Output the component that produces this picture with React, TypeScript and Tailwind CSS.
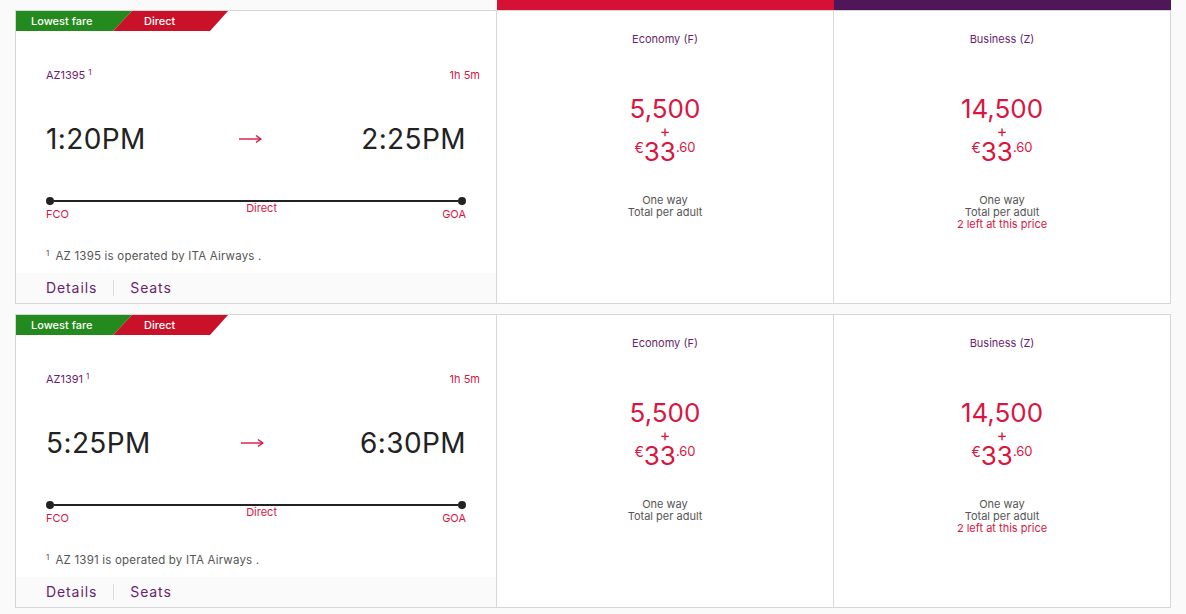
import React from "react";

type Flight = { code: string; num: string; dep: string; arr: string };

const flights: Flight[] = [
  { code: "AZ1395", num: "AZ 1395", dep: "1:20PM", arr: "2:25PM" },
  { code: "AZ1391", num: "AZ 1391", dep: "5:25PM", arr: "6:30PM" },
];

function Badge() {
  return (
    <div className="flex h-[20px] text-[11px] font-medium leading-[21px] text-white">
      <div className="w-[116px] bg-[#248a1d] pl-[15px] [clip-path:polygon(0_0,100%_0,97px_100%,0_100%)]">
        Lowest fare
      </div>
      <div className="-ml-[19px] w-[115px] bg-[#c91229] pl-[31px] [clip-path:polygon(19px_0,100%_0,97px_100%,0_100%)]">
        Direct
      </div>
    </div>
  );
}

function FareCol({ title, price, left }: { title: string; price: string; left?: boolean }) {
  return (
    <div className="flex flex-col items-center pt-[21px] text-center">
      <div className="text-[11px] leading-[14px] text-[#6a1f6e]">{title}</div>
      <div className="mt-[50px] text-[26px] leading-[26px] text-[#d9163f]">{price}</div>
      <div className="mt-[2px] text-[16px] leading-[14px] text-[#d9163f]">+</div>
      <div className="mt-[2px] flex h-[24px] items-start text-[#d9163f]">
        <span className="mt-[1px] text-[14px] leading-[14px]">€</span>
        <span className="text-[26px] leading-[24px]">33</span>
        <span className="mt-[1px] text-[13px] leading-[13px]">.60</span>
      </div>
      <div className="mt-[30px] text-[11px] leading-[12px] text-[#555]">One way</div>
      <div className="text-[11px] leading-[12px] text-[#555]">Total per adult</div>
      {left && <div className="text-[11px] leading-[12px] text-[#d9163f]">2 left at this price</div>}
    </div>
  );
}

function Arrow() {
  return (
    <svg width="23" height="10" viewBox="0 0 23 10" className="mr-[6px]">
      <path d="M0 5 H21.5" stroke="#d9163f" strokeWidth="1.4" />
      <path d="M17 1.5 L21.8 5 L17 8.5" fill="none" stroke="#d9163f" strokeWidth="1.4" />
    </svg>
  );
}

function Card({ f }: { f: Flight }) {
  return (
    <div className="flex h-[294px] border border-[#d6d6d8] bg-white">
      <div className="flex w-[481px] flex-col border-r border-[#d6d8e0]">
        <Badge />
        <div className="flex flex-1 flex-col px-[30px]">
          <div className="mt-[37px] flex items-center justify-between text-[11px] leading-[14px]">
            <span className="text-[#6a1f6e]">
              {f.code}
              <sup className="ml-[3px] text-[8px]">1</sup>
            </span>
            <span className="-mr-[14px] text-[#d9163f]">1h 5m</span>
          </div>
          <div className="mt-[40px] flex items-center justify-between text-[28px] leading-[34px] text-[#222]">
            <span className="tracking-[0.4px]">{f.dep}</span>
            <Arrow />
            <span className="tracking-[0.4px]">{f.arr}</span>
          </div>
          <div className="mt-[41px] flex items-center">
            <div className="h-[8px] w-[8px] rounded-full bg-[#222]" />
            <div className="h-[1.5px] flex-1 bg-[#222]" />
            <div className="h-[8px] w-[8px] rounded-full bg-[#222]" />
          </div>
          <div className="flex justify-between text-[11px] leading-[14px] text-[#d9163f]">
            <span className="mt-[2px]">FCO</span>
            <span className="-mt-[4px] ml-[12px]">Direct</span>
            <span className="mt-[2px]">GOA</span>
          </div>
          <div className="mt-[28px] text-[11.5px] leading-[14px] tracking-[0.2px] text-[#555]">
            <sup className="mr-[6px] text-[8px]">1</sup>
            {f.num} is operated by ITA Airways .
          </div>
        </div>
        <div className="flex h-[30px] items-center bg-[#fafafa] px-[30px] pb-[1px] text-[14px] tracking-[0.9px] text-[#6a1f6e]">
          <span>Details</span>
          <span className="mx-[16px] h-[16px] w-px bg-[#ddd]" />
          <span>Seats</span>
        </div>
      </div>
      <div className="flex-1 border-r border-[#d6d8e0]">
        <FareCol title="Economy (F)" price="5,500" />
      </div>
      <div className="flex-1">
        <FareCol title="Business (Z)" price="14,500" left />
      </div>
    </div>
  );
}

export default function App() {
  return (
    <div className="h-[614px] w-full bg-[#fafafa] px-[15px] font-['Inter',sans-serif]">
      <div className="flex h-[10px]">
        <div className="w-[482px]" />
        <div className="w-[337px] bg-[#d71036]" />
        <div className="w-[337px] bg-[#4f1759]" />
      </div>
      <Card f={flights[0]} />
      <div className="h-[10px]" />
      <Card f={flights[1]} />
    </div>
  );
}
